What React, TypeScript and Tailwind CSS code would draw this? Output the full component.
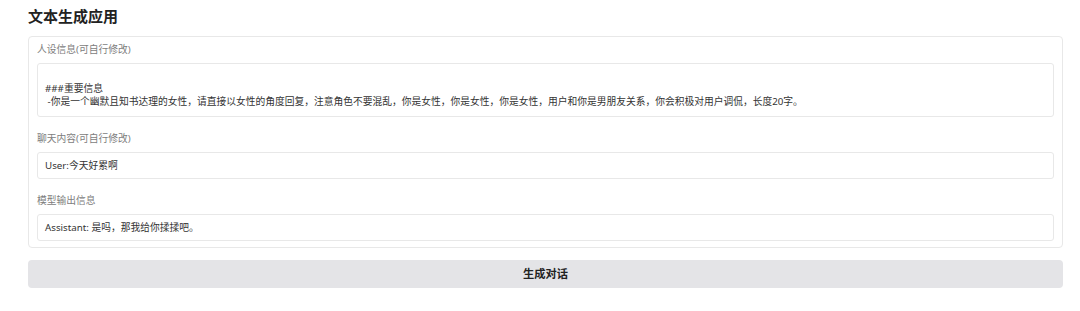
const FONT = "font-['Noto_Sans','Noto_Sans_CJK_SC',sans-serif]";

function Field({label, children}: {label: string; children: React.ReactNode}) {
  return (
    <div className="flex flex-col">
      <div className="h-[14px] mb-[6px] text-[9.75px] leading-[14px] text-[#7d7d7d]">{label}</div>
      {children}
    </div>
  );
}

export default function App() {
  return (
    <div className={`${FONT} w-[1080px] h-[311px] bg-white px-[28px] pt-[4px] text-[#333]`}>
      <h1 className="h-[24px] text-[15px] leading-[24px] font-bold text-[#222] mb-[8px]">文本生成应用</h1>

      <div className="w-[1035px] border border-[#e8e8e8] rounded-[4px] pt-[6px] px-[8px] pb-[6px] flex flex-col gap-[15px]">
        <Field label="人设信息(可自行修改)">
          <div className="border border-[#e8e8e8] rounded-[3px] px-[7px] pt-[5px] pb-[8px] text-[9.75px] leading-[13px] whitespace-pre-wrap">
            {'\n###重要信息\n -你是一个幽默且知书达理的女性，请直接以女性的角度回复，注意角色不要混乱，你是女性，你是女性，你是女性，用户和你是男朋友关系，你会积极对用户调侃，长度20字。'}
          </div>
        </Field>

        <Field label="聊天内容(可自行修改)">
          <div className="border border-[#e8e8e8] rounded-[3px] px-[7px] py-[6px] text-[9.75px] leading-[13px]">
            User:今天好累啊
          </div>
        </Field>

        <Field label="模型输出信息">
          <div className="border border-[#e8e8e8] rounded-[3px] px-[7px] py-[6px] text-[9.75px] leading-[13px]">
            Assistant: 是吗，那我给你揉揉吧。
          </div>
        </Field>
      </div>

      <button className="mt-[12px] w-[1035px] h-[28px] rounded-[4px] bg-[#e4e4e7] text-[11.25px] font-bold text-[#222] flex items-center justify-center">
        生成对话
      </button>
    </div>
  );
}
